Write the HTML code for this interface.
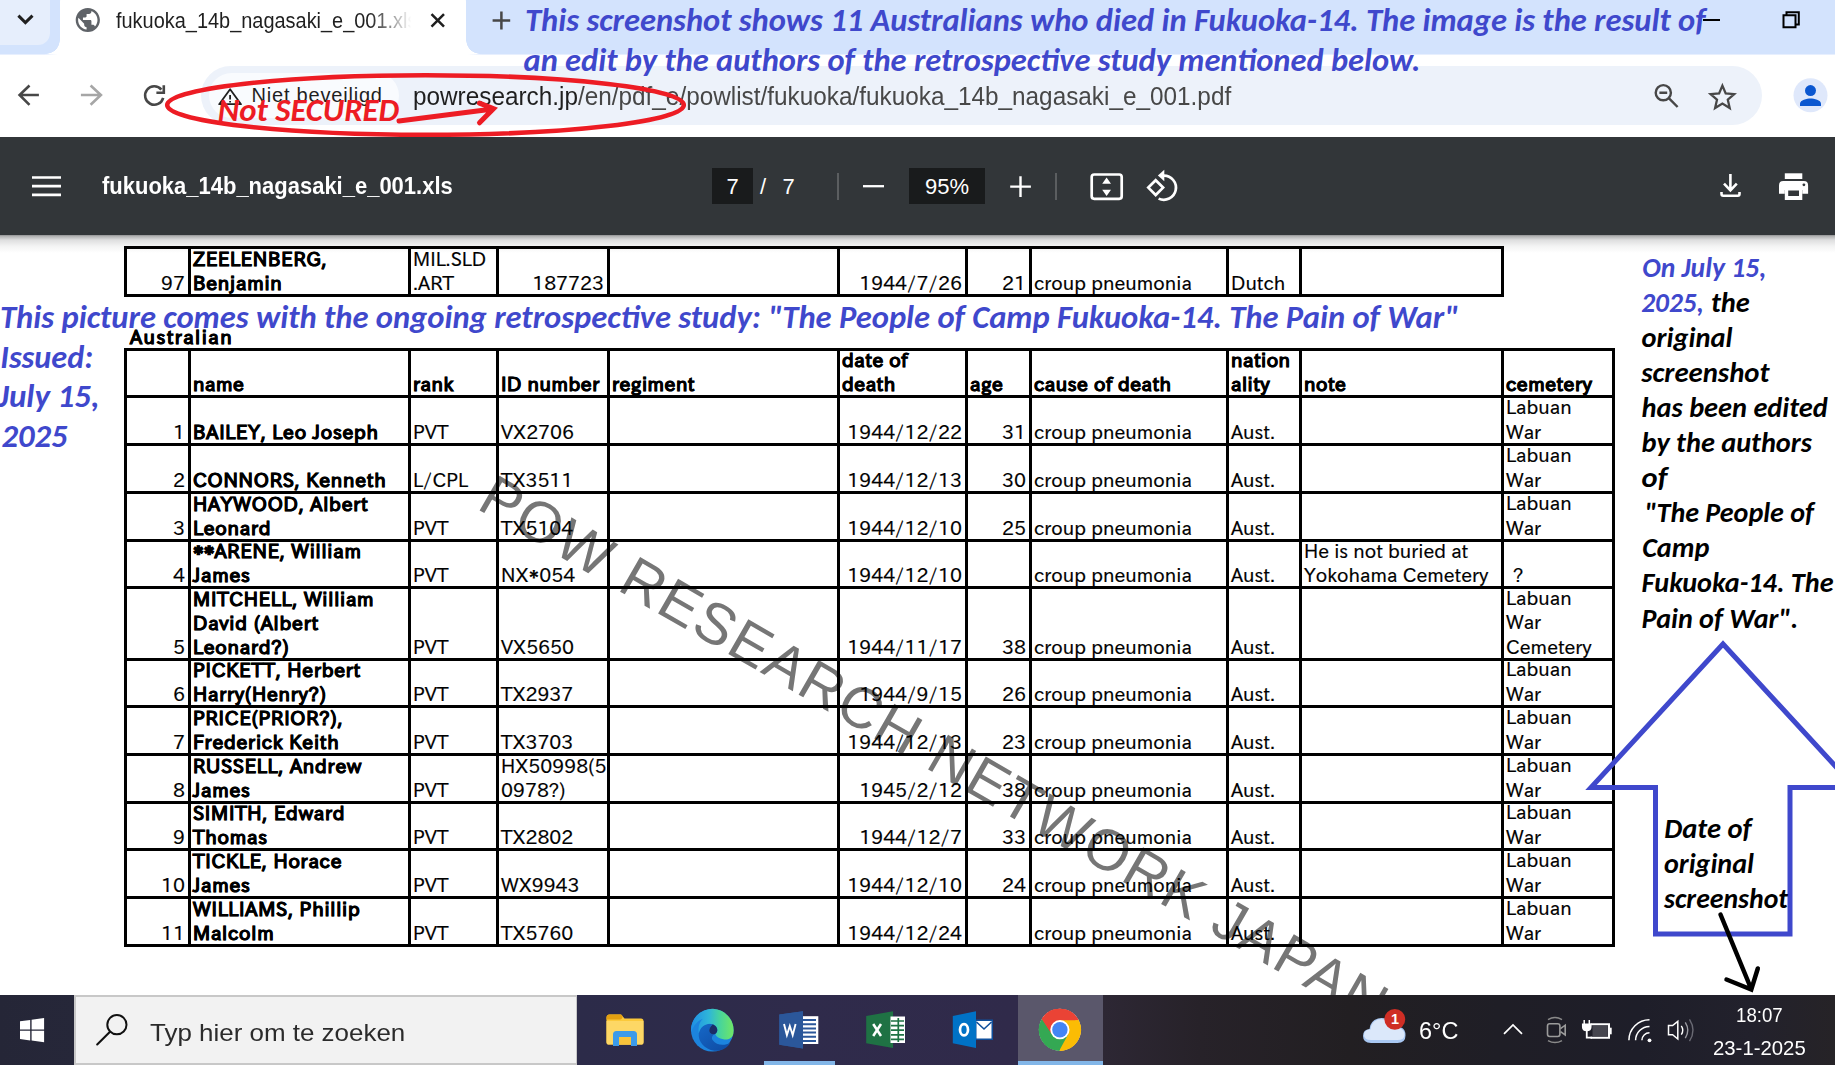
<!DOCTYPE html>
<html lang="en">
<head>
<meta charset="utf-8">
<title>fukuoka_14b_nagasaki_e_001.xls</title>
<style>
*{box-sizing:border-box;margin:0;padding:0}
html,body{width:1835px;height:1065px;overflow:hidden;background:#fff}
body{font-family:"Liberation Sans",sans-serif;color:#1f1f1f}
#screen{position:relative;width:1835px;height:1065px;overflow:hidden;background:#fff}
.abs{position:absolute}
svg{position:absolute;overflow:visible}
/* ---------- tab strip ---------- */
#tabstrip{position:absolute;left:0;top:0;width:1835px;height:54px;background:#d3e3fd}
#tabsearch{position:absolute;left:-12px;top:-12px;width:62px;height:57px;border-radius:12px;background:#e6eefc}
#tab{position:absolute;left:60px;top:-12px;width:406px;height:66px;background:#fff;border-radius:14px 14px 0 0}
#tab:before,#tab:after{content:"";position:absolute;bottom:0;width:14px;height:14px;background:radial-gradient(circle at 0 0,rgba(255,255,255,0) 13.5px,#fff 14px)}
#tab:before{left:-14px}
#tab:after{right:-14px;transform:scaleX(-1)}
#tabtitle{position:absolute;left:116px;top:6px;width:326px;height:30px;overflow:hidden;white-space:nowrap;font-size:22px;line-height:30px;color:#1f1f1f;transform-origin:0 50%;transform:scaleX(.906);-webkit-mask-image:linear-gradient(90deg,#000 86%,transparent 100%);mask-image:linear-gradient(90deg,#000 86%,transparent 100%)}
/* ---------- toolbar ---------- */
#toolbar{position:absolute;left:0;top:54px;width:1835px;height:83px;background:#fff}
#toolbar:before{content:"";position:absolute;left:0;top:0;width:1835px;height:1px;background:linear-gradient(90deg,#e7effe 0,#e7effe 44px,#fff 58px,#fff 468px,#e7effe 482px,#e7effe 100%)}
#omnibox{position:absolute;left:201px;top:12px;width:1561px;height:58.500px;border-radius:30px;background:#edf2fa}
#chip{position:absolute;left:8px;top:7px;width:190px;height:45px;border-radius:23px;background:#f9fbfe}
#chiptext{position:absolute;left:251.500px;top:83px;font-size:20px;line-height:24px;letter-spacing:.8px;white-space:nowrap;color:#1f1f1f}
#url{position:absolute;left:413px;top:80.500px;font-size:25px;line-height:30px;white-space:nowrap;color:#474747;transform-origin:0 50%;transform:scaleX(.973)}
#url b{font-weight:normal;color:#1f1f1f}
/* ---------- pdf toolbar ---------- */
#pdfbar{position:absolute;left:0;top:137px;width:1835px;height:98px;background:#323639;color:#fff}
#pdftitle{position:absolute;left:101.500px;top:33.700px;font-size:24px;line-height:30px;font-weight:bold;white-space:nowrap;color:#fff;transform-origin:0 50%;transform:scaleX(.916)}
.pbox{position:absolute;top:31px;height:36px;background:#191b1c;color:#fff;font-size:22px;line-height:38px;text-align:center}
.psep{position:absolute;top:36px;width:2px;height:27px;background:#5b5e60}
#shadow{position:absolute;left:0;top:235px;width:1835px;height:18px;pointer-events:none;background:linear-gradient(rgba(20,22,24,.47) 0,rgba(20,22,24,.32) 1.5px,rgba(20,22,24,.14) 5px,rgba(20,22,24,.05) 11px,rgba(20,22,24,0) 18px)}
/* ---------- pdf content ---------- */
#content{position:absolute;left:0;top:235px;width:1835px;height:760px;background:#fff}

/* ---------- table ---------- */
table.grid{position:absolute;border-collapse:separate;border-spacing:0;table-layout:fixed;font-family:"IPAPGothic","Liberation Sans",sans-serif;font-size:19px;line-height:24px;color:#000}
table.grid td,table.grid th{border-left:3px solid #000;border-top:3px solid #000;padding:0;vertical-align:bottom;text-align:left;font-weight:normal;white-space:nowrap;overflow:visible}
table.grid td:last-child,table.grid th:last-child{border-right:3px solid #000}
table.grid tr:last-child td{border-bottom:3px solid #000}
table.grid div{padding:0 3px 0 2px;margin-top:-9px;position:relative;top:1px}
table.grid{-webkit-text-stroke:.2px #000}
table.grid th{font-weight:bold;letter-spacing:.5px;-webkit-text-stroke:.45px #000}
table.grid td.b{font-weight:bold;letter-spacing:.75px;-webkit-text-stroke:.45px #000}
table.grid td.r{text-align:right}
table.grid td.s{font-size:19px;line-height:24.5px}
table.grid .ast{font-size:29px;line-height:0;position:relative;top:9px;letter-spacing:0}
#t2{width:1491px}
#t1{width:1380px}
#aus{position:absolute;left:130px;top:325px;font-family:"IPAPGothic","Liberation Sans",sans-serif;font-size:19px;line-height:24px;font-weight:bold;letter-spacing:1.45px;color:#000;white-space:nowrap;-webkit-text-stroke:.45px #000}
/* ---------- taskbar ---------- */
#taskbar{position:absolute;left:0;top:995px;width:1835px;height:70px;background:linear-gradient(90deg,#252637 0,#262739 75px,#2c2b49 580px,#2f2b4b 800px,#302a4a 1017px,#2d2734 1104px,#272229 1200px,#221f22 1350px,#1f1e26 1500px,#1e1e29 1640px,#22212c 1750px,#262327 1835px)}
#searchbox{position:absolute;left:74px;top:0;width:503px;height:70px;background:#f2f2f2;border:2px solid #c8c8c8;border-right-width:1px}
#searchtext{position:absolute;left:150px;top:20.600px;font-size:24.5px;line-height:34px;color:#2b2b2b;white-space:nowrap;transform-origin:0 50%;transform:scaleX(1.059)}

#chrometile{position:absolute;left:1018px;top:0;width:85px;height:66px;background:#5a576b}
.runbar{position:absolute;top:66px;height:4px;background:#82b6e8}
#badge1{position:absolute;left:1385px;top:14px;width:20px;text-align:center;font-size:14.5px;line-height:21px;font-weight:bold;color:#fff}
#temp{position:absolute;left:1419px;top:20.500px;font-size:24.5px;line-height:30px;color:#fff;white-space:nowrap;transform-origin:0 50%;transform:scaleX(.958)}
#clock{position:absolute;left:1736px;top:6.600px;font-size:20.4px;line-height:26px;color:#fff;white-space:nowrap;transform-origin:0 50%;transform:scaleX(.915)}
#date{position:absolute;left:1713px;top:39.500px;font-size:20.4px;line-height:26px;color:#fff;white-space:nowrap;transform-origin:0 50%;transform:scaleX(.997)}
</style>
</head>
<body>
<div id="screen">

<!-- PDF content -->
<div id="content"></div>
<svg id="wm" width="1835" height="1065" viewBox="0 0 1835 1065" style="left:0;top:0"><text x="0" y="0" transform="translate(475.5,508) rotate(30)" font-family="'Liberation Sans', sans-serif" font-size="58" letter-spacing="1.9" fill="#767676">POW RESEARCH NETWORK JAPAN</text></svg>
<div id="aus">Australian</div>
<table id="t2" class="grid" style="left:124px;top:348px">
<colgroup><col style="width:64px"><col style="width:220px"><col style="width:88px"><col style="width:111px"><col style="width:230px"><col style="width:128px"><col style="width:64px"><col style="width:197px"><col style="width:73px"><col style="width:202px"><col style="width:114px"></colgroup>
<tr style="height:47px"><th><div></div></th><th><div>name</div></th><th><div>rank</div></th><th><div>ID number</div></th><th><div>regiment</div></th><th><div>date of<br>death</div></th><th><div>age</div></th><th><div>cause of death</div></th><th><div>nation<br>ality</div></th><th><div>note</div></th><th><div>cemetery</div></th></tr>
<tr style="height:48px"><td class="r"><div>1</div></td><td class="b"><div>BAILEY, Leo Joseph</div></td><td><div>PVT</div></td><td><div>VX2706</div></td><td><div></div></td><td class="r"><div>1944/12/22</div></td><td class="r"><div>31</div></td><td><div>croup pneumonia</div></td><td><div>Aust.</div></td><td><div></div></td><td class="s"><div>Labuan<br>War</div></td></tr>
<tr style="height:48px"><td class="r"><div>2</div></td><td class="b"><div>CONNORS, Kenneth</div></td><td><div>L/CPL</div></td><td><div>TX3511</div></td><td><div></div></td><td class="r"><div>1944/12/13</div></td><td class="r"><div>30</div></td><td><div>croup pneumonia</div></td><td><div>Aust.</div></td><td><div></div></td><td class="s"><div>Labuan<br>War</div></td></tr>
<tr style="height:48px"><td class="r"><div>3</div></td><td class="b"><div>HAYWOOD, Albert<br>Leonard</div></td><td><div>PVT</div></td><td><div>TX5104</div></td><td><div></div></td><td class="r"><div>1944/12/10</div></td><td class="r"><div>25</div></td><td><div>croup pneumonia</div></td><td><div>Aust.</div></td><td><div></div></td><td class="s"><div>Labuan<br>War</div></td></tr>
<tr style="height:47px"><td class="r"><div>4</div></td><td class="b"><div><span class="ast">*</span><span class="ast">*</span>ARENE, William<br>James</div></td><td><div>PVT</div></td><td><div>NX<span class="ast">*</span>054</div></td><td><div></div></td><td class="r"><div>1944/12/10</div></td><td class="r"><div></div></td><td><div>croup pneumonia</div></td><td><div>Aust.</div></td><td><div>He is not buried at<br>Yokohama Cemetery</div></td><td class="s"><div style="padding-left:9px">?</div></td></tr>
<tr style="height:72px"><td class="r"><div>5</div></td><td class="b"><div>MITCHELL, William<br>David (Albert<br>Leonard?)</div></td><td><div>PVT</div></td><td><div>VX5650</div></td><td><div></div></td><td class="r"><div>1944/11/17</div></td><td class="r"><div>38</div></td><td><div>croup pneumonia</div></td><td><div>Aust.</div></td><td><div></div></td><td class="s"><div>Labuan<br>War<br>Cemetery</div></td></tr>
<tr style="height:47px"><td class="r"><div>6</div></td><td class="b"><div>PICKETT, Herbert<br>Harry(Henry?)</div></td><td><div>PVT</div></td><td><div>TX2937</div></td><td><div></div></td><td class="r"><div>1944/9/15</div></td><td class="r"><div>26</div></td><td><div>croup pneumonia</div></td><td><div>Aust.</div></td><td><div></div></td><td class="s"><div>Labuan<br>War</div></td></tr>
<tr style="height:48px"><td class="r"><div>7</div></td><td class="b"><div>PRICE(PRIOR?),<br>Frederick Keith</div></td><td><div>PVT</div></td><td><div>TX3703</div></td><td><div></div></td><td class="r"><div>1944/12/13</div></td><td class="r"><div>23</div></td><td><div>croup pneumonia</div></td><td><div>Aust.</div></td><td><div></div></td><td class="s"><div>Labuan<br>War</div></td></tr>
<tr style="height:48px"><td class="r"><div>8</div></td><td class="b"><div>RUSSELL, Andrew<br>James</div></td><td><div>PVT</div></td><td><div>HX50998(5<br>0978?)</div></td><td><div></div></td><td class="r"><div>1945/2/12</div></td><td class="r"><div>38</div></td><td><div>croup pneumonia</div></td><td><div>Aust.</div></td><td><div></div></td><td class="s"><div>Labuan<br>War</div></td></tr>
<tr style="height:47px"><td class="r"><div>9</div></td><td class="b"><div>SIMITH, Edward<br>Thomas</div></td><td><div>PVT</div></td><td><div>TX2802</div></td><td><div></div></td><td class="r"><div>1944/12/7</div></td><td class="r"><div>33</div></td><td><div>croup pneumonia</div></td><td><div>Aust.</div></td><td><div></div></td><td class="s"><div>Labuan<br>War</div></td></tr>
<tr style="height:48px"><td class="r"><div>10</div></td><td class="b"><div>TICKLE, Horace<br>James</div></td><td><div>PVT</div></td><td><div>WX9943</div></td><td><div></div></td><td class="r"><div>1944/12/10</div></td><td class="r"><div>24</div></td><td><div>croup pneumonia</div></td><td><div>Aust.</div></td><td><div></div></td><td class="s"><div>Labuan<br>War</div></td></tr>
<tr style="height:51px"><td class="r"><div>11</div></td><td class="b"><div>WILLIAMS, Phillip<br>Malcolm</div></td><td><div>PVT</div></td><td><div>TX5760</div></td><td><div></div></td><td class="r"><div>1944/12/24</div></td><td class="r"><div></div></td><td><div>croup pneumonia</div></td><td><div>Aust.</div></td><td><div></div></td><td class="s"><div>Labuan<br>War</div></td></tr>
</table>
<table id="t1" class="grid" style="left:124px;top:246px">
<colgroup><col style="width:64px"><col style="width:220px"><col style="width:88px"><col style="width:111px"><col style="width:230px"><col style="width:128px"><col style="width:64px"><col style="width:197px"><col style="width:73px"><col style="width:205px"></colgroup>
<tr style="height:51px"><td class="r"><div>97</div></td><td class="b"><div>ZEELENBERG,<br>Benjamin</div></td><td><div>MIL.SLD<br>.ART</div></td><td class="r"><div>187723</div></td><td><div></div></td><td class="r"><div>1944/7/26</div></td><td class="r"><div>21</div></td><td><div>croup pneumonia</div></td><td><div>Dutch</div></td><td><div></div></td></tr>
</table>

<!-- Chrome tab strip -->
<div id="tabstrip">
  <div id="tabsearch"></div>
  <div id="tab"></div>
  <div id="tabtitle">fukuoka_14b_nagasaki_e_001.xls</div>
</div>

<!-- Chrome toolbar -->
<div id="toolbar">
  <div id="omnibox"><div id="chip"></div></div>
</div>
<div id="chiptext">Niet beveiligd</div>
<div id="url"><b>powresearch.jp</b>/en/pdf_e/powlist/fukuoka/fukuoka_14b_nagasaki_e_001.pdf</div>


<!-- Chrome UI icons -->
<svg id="chromeicons" width="1835" height="137" viewBox="0 0 1835 137" style="left:0;top:0" fill="none">
  <path d="M18.4,15.6 L25.4,22.6 L32.5,15.6" stroke="#1f1f1f" stroke-width="3"/>
  <g transform="translate(87.8,20) scale(1.21) translate(-12,-12)"><path fill="#5f6368" d="M12 2C6.48 2 2 6.48 2 12s4.48 10 10 10 10-4.48 10-10S17.52 2 12 2zm-1 17.93c-3.95-.49-7-3.85-7-7.93 0-.62.08-1.21.21-1.79L9 15v1c0 1.1.9 2 2 2v1.930zm6.9-2.54c-.26-.81-1-1.39-1.9-1.39h-1v-3c0-.55-.45-1-1-1H8v-2h2c.55 0 1-.45 1-1V7h2c1.1 0 2-.9 2-2v-.41c2.93 1.19 5 4.06 5 7.41 0 2.08-.8 3.97-2.1 5.39z"/></g>
  <path d="M431.5,14.2 L444,26.7 M444,14.2 L431.5,26.7" stroke="#1f1f1f" stroke-width="2.5"/>
  <path d="M492.6,20.6 H510.2 M501.4,11.6 V29.6" stroke="#474747" stroke-width="2.5"/>
  <path d="M1703,20 H1720" stroke="#000" stroke-width="2"/>
  <path d="M1783.5,15.3 H1795.5 V27.3 H1783.5 Z M1786.5,15 V12.3 H1798.8 V24.5 H1796" stroke="#000" stroke-width="2"/>
  <path d="M38.9,95 H20 M29.5,85.5 L19.6,95 L29.5,104.8" stroke="#474747" stroke-width="2.6"/>
  <path d="M80.9,95 H100.6 M90.6,85.5 L100.9,95 L90.6,104.8" stroke="#a6a6a6" stroke-width="2.6"/>
  <path d="M161.35,89.6 A9.2,9.2 0 1 0 163.19,97.88 M156.4,92.7 H163.8 V85.3" stroke="#474747" stroke-width="2.6"/>
  <path d="M230.1,89.3 L241,104.2 H219.2 Z M230.1,95 V99.5 M230.1,101 V102.6" stroke="#1f1f1f" stroke-width="1.8" stroke-linejoin="round"/>
  <circle cx="1663.3" cy="92.7" r="7.6" stroke="#474747" stroke-width="2.4"/>
  <path d="M1668.8,98.2 L1677.6,107 M1659.4,92.7 H1667.2" stroke="#474747" stroke-width="2.4"/>
  <path d="M1722.4,85.6 L1725.7,93.4 L1734.2,94.1 L1727.8,99.7 L1729.7,108 L1722.4,103.6 L1715.1,108 L1717,99.7 L1710.6,94.1 L1719.1,93.4 Z" stroke="#474747" stroke-width="2.3" stroke-linejoin="miter"/>
  <circle cx="1810.5" cy="95.3" r="17" fill="#dfe8fb"/>
  <circle cx="1810.5" cy="90.6" r="5.5" fill="#0b57d0"/>
  <path d="M1800,106 V103.5 C1800,100 1807,98.4 1810.5,98.4 C1814,98.4 1821,100 1821,103.5 V106 Z" fill="#0b57d0"/>
</svg>

<!-- PDF viewer toolbar -->
<div id="pdfbar">
  <div id="pdftitle">fukuoka_14b_nagasaki_e_001.xls</div>
  <div class="pbox" style="left:712px;width:41px">7</div>
  <div class="abs" style="left:760px;top:31px;font-size:22px;line-height:38px">/</div>
  <div class="abs" style="left:782.500px;top:31px;font-size:22px;line-height:38px">7</div>
  <div class="psep" style="left:837px"></div>
  <div class="pbox" style="left:909px;width:76px">95%</div>
  <div class="psep" style="left:1055px"></div>
</div>

<svg id="pdficons" width="1835" height="98" viewBox="0 137 1835 98" style="left:0;top:137px" fill="none">
  <path d="M32,177.5 H61 M32,186.2 H61 M32,194.9 H61" stroke="#fff" stroke-width="2.7"/>
  <path d="M863,186.2 H884" stroke="#fff" stroke-width="2.3"/>
  <path d="M1010.2,186.6 H1030.9 M1020.5,176.2 V197" stroke="#fff" stroke-width="2.4"/>
  <rect x="1091.7" y="174.5" width="30" height="24.3" rx="2.5" stroke="#fff" stroke-width="2.7"/>
  <path d="M1106.6,177.4 L1111,183.8 H1102.2 Z M1106.6,196 L1111,189.8 H1102.2 Z" fill="#fff"/>
  <path d="M1155.7,180.2 L1163.1,187.6 L1155.7,195 L1148.3,187.6 Z" stroke="#fff" stroke-width="2.7"/>
  <path d="M1163.6,175.6 A12.1,12.1 0 1 1 1158.6,198.6" stroke="#fff" stroke-width="2.7"/>
  <path d="M1157.9,175.6 L1164.3,169.8 V181.3 Z" fill="#fff"/>
  <path d="M1730.4,174 V189.5 M1724,183.6 L1730.4,190.3 L1736.8,183.6 M1721.5,192 V194 Q1721.5,195.7 1723.2,195.7 H1737.8 Q1739.5,195.7 1739.5,194 V192" stroke="#fff" stroke-width="2.6"/>
  <rect x="1784.8" y="173.3" width="17.5" height="5.7" fill="#fff"/>
  <path d="M1779,185.4 Q1779,181.1 1783.3,181.1 H1803.8 Q1808.1,181.1 1808.1,185.4 V193.8 H1802.3 V190 H1784.8 V193.8 H1779 Z" fill="#fff"/>
  <path d="M1784.8,190 H1802.3 V199.9 H1784.8 Z M1788.2,190.5 V196 H1799 V190.5 Z" fill="#fff" fill-rule="evenodd"/>
  <circle cx="1803.9" cy="184.8" r="1.4" fill="#323639"/>
</svg>
<div id="shadow"></div>

<!-- Windows taskbar -->
<div id="taskbar">
  <div id="searchbox"></div>
  <div id="searchtext">Typ hier om te zoeken</div>

  <div id="chrometile"></div>
  <div class="runbar" style="left:764px;width:71px"></div>
  <div class="runbar" style="left:1018px;width:85px"></div>
  <svg id="taskicons" width="1835" height="70" viewBox="0 995 1835 70" style="left:0;top:0" fill="none">
    <!-- start -->
    <path d="M20,1021.3 L30.2,1019.9 V1029.4 H20 Z M31.6,1019.7 L44.1,1017.9 V1029.4 H31.6 Z M20,1030.8 H30.2 V1040.4 L20,1039 Z M31.6,1030.8 H44.1 V1042.3 L31.6,1040.6 Z" fill="#fff"/>
    <!-- search glass -->
    <circle cx="116.9" cy="1024.7" r="9.6" stroke="#111" stroke-width="2"/>
    <path d="M110,1031.8 L97.2,1044.4" stroke="#111" stroke-width="2.1" stroke-linecap="round"/>
    <!-- file explorer -->
    <path d="M606.5,1018 Q606.5,1014.4 609.5,1014.4 H621 L624.5,1018.4 H641 Q643.5,1018.4 643.5,1021 V1042 Q643.5,1044.6 641,1044.6 H609 Q606.5,1044.6 606.5,1042 Z" fill="#fbc93b"/>
    <path d="M606.5,1017.5 Q606.5,1014.4 609.5,1014.4 H620.5 Q622.5,1014.4 622.5,1016.6 Q622.5,1019.4 620,1019.4 H606.5 Z" fill="#e3a010"/>
    <path d="M606.5,1021 H643.5 V1042 Q643.5,1044.6 641,1044.6 H609 Q606.5,1044.6 606.5,1042 Z" fill="#fdd765"/>
    <path d="M613,1046 V1034.5 Q613,1031 616.5,1031 H633.5 Q637,1031 637,1034.5 V1046 H631 V1037 H619 V1046 Z" fill="#3c9be9"/>
    <rect x="619" y="1037" width="12" height="7.6" fill="#f9c33a"/>
    <!-- edge -->
    <defs>
      <linearGradient id="eg1" x1="-21" y1="0" x2="21" y2="0" gradientUnits="userSpaceOnUse"><stop offset="0" stop-color="#1f8fe5"/><stop offset=".42" stop-color="#2fb6d8"/><stop offset=".68" stop-color="#47d49c"/><stop offset="1" stop-color="#70e666"/></linearGradient>
      <linearGradient id="eg2" x1="-10" y1="-8" x2="10" y2="20" gradientUnits="userSpaceOnUse"><stop offset="0" stop-color="#1567c7"/><stop offset="1" stop-color="#0f4ea6"/></linearGradient>
    </defs>
    <g transform="translate(712.3,1030.2)">
      <circle r="21.3" fill="#1c84de"/>
      <path d="M2.9,3.7 C0,5 -3.500,3 -3,-0.500 C-2.500,-3.500 0,-5.500 0.500,-6 C-5,-8 -12,-4.500 -13.500,3 C-14.500,11 -8,19 2,20.500 C8,21.300 14.500,18.500 18,12.500 C12,16 4,15 0.500,10 C-1,8 -0.500,5 2.9,3.7 Z" fill="url(#eg2)"/>
      <path d="M-21.2,2 A21.3,21.3 0 1 1 21,3.500 C20.500,8 15,10 11,9 C7,8.300 4,6.500 2.9,3.700 C6.500,1.500 5.500,-4 0.500,-6 C-5,-8 -12,-4.500 -13.500,3 C-14.500,-3 -13,-8 -9.500,-11.500 C-14,-10 -19,-5 -21.200,2 Z" fill="url(#eg1)"/>
      <path d="M2.9,3.700 C0,5 -3.500,3 -3,-0.500 C-2.600,-3 -0.500,-5 0.500,-6 C5.500,-4 6.500,1.500 2.900,3.700 Z" fill="#1b2c66"/>
    </g>
    <!-- word -->
    <path d="M779.3,1014.500 L803,1011.300 V1048.500 L779.3,1044.800 Z" fill="#2b579a"/>
    <rect x="801.300" y="1016.200" width="17" height="27.800" fill="#fff"/>
    <path d="M803,1020 H816 M803,1024.200 H816 M803,1028.400 H816 M803,1032.600 H816 M803,1036.800 H816 M803,1041 H816" stroke="#2b579a" stroke-width="2"/>
    <path d="M779.3,1014.500 L803,1011.300 V1048.500 L779.3,1044.800 Z" fill="#2b579a"/>
    <path d="M784,1024 L786.900,1035 L789.800,1026 L792.700,1035 L795.600,1024" stroke="#fff" stroke-width="1.9" stroke-linejoin="miter"/>
    <!-- excel -->
    <path d="M866.2,1016 L893,1011.3 V1048 L866.2,1043.3 Z" fill="#1f7244"/>
    <rect x="890.5" y="1016.5" width="14.5" height="26.5" fill="#fff"/>
    <path d="M891,1021 H904 M891,1025.6 H904 M891,1030.2 H904 M891,1034.8 H904 M891,1039.4 H904 M898.3,1018 V1042" stroke="#1f7244" stroke-width="1.7"/>
    <path d="M873.2,1024 L881,1036 M881,1024 L873.2,1036" stroke="#fff" stroke-width="2.5"/>
    <!-- outlook -->
    <rect x="975" y="1019.5" width="18" height="20.5" fill="#0f4f9c"/>
    <path d="M976.5,1021 H991.5 V1038.5 H976.5 Z" fill="#fff"/>
    <path d="M976.5,1022 L984,1029 L991.5,1022" stroke="#0f4f9c" stroke-width="1.6"/>
    <path d="M952.8,1016 L976,1011.3 V1048 L952.8,1043.3 Z" fill="#0072c6"/>
    <ellipse cx="964" cy="1029.8" rx="4" ry="5.6" stroke="#fff" stroke-width="2.7"/>
    <!-- chrome -->
    <circle cx="1059.9" cy="1029.7" r="21" fill="#fff"/>
    <path d="M1059.9,1029.7 L1041.7,1019.2 A21,21 0 0 1 1078.1,1019.2 Z" fill="#ea4335"/>
    <path d="M1059.9,1029.7 L1078.1,1019.2 A21,21 0 0 1 1059.9,1050.7 Z" fill="#fbbc04"/>
    <path d="M1059.9,1029.7 L1059.9,1050.7 A21,21 0 0 1 1041.7,1019.2 Z" fill="#34a853"/>
    <path d="M1059.9,1020.2 H1078.5 A21,21 0 0 0 1041.7,1019.2 L1051.7,1034.5 Z" fill="#ea4335"/>
    <path d="M1068.1,1034.5 L1059.2,1050.7 A21,21 0 0 0 1078.5,1020.2 H1059.9 Z" fill="#fbbc04"/>
    <path d="M1051.7,1034.5 L1041.7,1019.2 A21,21 0 0 0 1059.2,1050.7 L1068.1,1034.5 Z" fill="#34a853"/>
    <circle cx="1059.9" cy="1029.7" r="9.6" fill="#fff"/>
    <circle cx="1059.9" cy="1029.7" r="7.7" fill="#4285f4"/>
    <!-- weather -->
    <path d="M1371,1043 Q1363,1043 1363,1036 Q1363,1029.5 1369.5,1029 Q1370,1021 1378,1018.5 Q1386,1016.5 1391,1023 Q1398,1021 1401,1027.5 Q1405.5,1029 1405.5,1035.5 Q1405.5,1043 1397.5,1043 Z" fill="#a9c8f2"/>
    <path d="M1371,1040 Q1364,1040 1364,1035 Q1364,1029.5 1370.5,1029.5 Q1371,1022 1378,1019.5 Q1385,1018 1390,1024 Q1397,1022 1400,1028.5 Q1404.500,1030 1404.500,1034.5 Q1404.500,1040 1397.500,1040 Z" fill="#dbe8fa"/>
    <circle cx="1394.8" cy="1019.4" r="10.4" fill="#cf2e25"/>
    <!-- tray chevron -->
    <path d="M1504,1033.8 L1513,1025 L1522,1033.8" stroke="#fff" stroke-width="1.7"/>
    <!-- meet now -->
    <rect x="1547.500" y="1023.7" width="12.4" height="12.8" rx="2.2" stroke="#9b9b9b" stroke-width="1.6"/>
    <path d="M1560.500,1028.6 L1565.200,1025.2 V1035 L1560.500,1031.6" stroke="#9b9b9b" stroke-width="1.6"/>
    <path d="M1548,1019.600 Q1555,1015.6 1562,1019.600 M1548,1040.600 Q1555,1044.6 1562,1040.600" stroke="#8a8a8a" stroke-width="1.5"/>
    <!-- battery -->
    <path d="M1590.500,1024.300 H1609 V1037.700 H1590.500" stroke="#fff" stroke-width="2"/>
    <rect x="1609.5" y="1027.700" width="2.2" height="6.6" fill="#fff"/>
    <rect x="1592.5" y="1026" width="15.3" height="10" fill="#d8d8dc" opacity=".22"/>
    <path d="M1584.200,1020 V1024 M1589.300,1020 V1024 M1582.700,1024.300 H1590.800 V1027 Q1590.800,1030.500 1586.750,1030.500 Q1582.700,1030.500 1582.700,1027 Z" stroke="#fff" stroke-width="1.5" fill="#fff"/>
    <path d="M1586.750,1030 V1037.700 H1592" stroke="#fff" stroke-width="1.8"/>
    <!-- wifi -->
    <circle cx="1649.500" cy="1040.300" r="1.9" fill="#fff"/>
    <path d="M1641.900,1040.300 A7.600,7.600 0 0 1 1649.500,1032.700 M1635.600,1040.300 A13.900,13.900 0 0 1 1649.500,1026.400 M1628.900,1040.300 A20.600,20.600 0 0 1 1649.500,1019.700" stroke="#fff" stroke-width="1.5"/>
    <!-- speaker -->
    <path d="M1668.500,1025.600 H1672.600 L1677.800,1021.300 V1039 L1672.600,1034.700 H1668.500 Z" stroke="#fff" stroke-width="1.5" stroke-linejoin="miter"/>
    <path d="M1681.300,1025.800 Q1684.300,1030.200 1681.300,1034.600" stroke="#fff" stroke-width="1.4"/>
    <path d="M1685.300,1022.300 Q1690.300,1030.200 1685.300,1038.100" stroke="#9a9aa2" stroke-width="1.4"/>
    <path d="M1689.500,1019.300 Q1696.500,1030.200 1689.500,1041.100" stroke="#6a6a74" stroke-width="1.4"/>
  </svg>
  <div id="badge1">1</div>
  <div id="temp">6°C</div>
  <div id="clock">18:07</div>
  <div id="date">23-1-2025</div>
</div>

<!-- annotations drawn over the screenshot -->
<svg id="anno" width="1835" height="1065" viewBox="0 0 1835 1065" style="left:0;top:0" font-family="Carlito, 'Liberation Sans', sans-serif" font-weight="bold" font-style="italic">
<ellipse cx="425.5" cy="105" rx="258.3" ry="29.8" fill="none" stroke="#ed1c24" stroke-width="4.6"/>
<path d="M399,121 L493,108.9 M479.5,103.2 L493.5,108.6 L479.5,122.8" fill="none" stroke="#ed1c24" stroke-width="5" stroke-linecap="round" stroke-linejoin="miter"/>
<path d="M1723,644 L1591,787.5 L1655.5,787.5 L1655.5,934 L1790,934 L1790,787.5 L1855,787.5 Z" fill="none" stroke="#3f48cc" stroke-width="5" stroke-linejoin="miter"/>
<path d="M1720.5,914.5 L1750.8,988 M1726.5,979.5 L1751.3,989.5 L1757.8,968.5" fill="none" stroke="#000" stroke-width="4.5" stroke-linecap="round" stroke-linejoin="miter"/>
<text x="525" y="31.0" font-size="32.5" fill="#3f48cc" textLength="1180.5" lengthAdjust="spacingAndGlyphs">This screenshot shows 11 Australians who died in Fukuoka-14. The image is the result of</text>
<text x="523.5" y="71.2" font-size="32.5" fill="#3f48cc" textLength="897.0" lengthAdjust="spacingAndGlyphs">an edit by the authors of the retrospective study mentioned below.</text>
<text x="217.7" y="121.3" font-size="32.5" fill="#ed1c24" textLength="181.5" lengthAdjust="spacingAndGlyphs">Not SECURED</text>
<text x="0" y="327.5" font-size="32.5" fill="#3f48cc" textLength="1458.5" lengthAdjust="spacingAndGlyphs">This picture comes with the ongoing retrospective study: "The People of Camp Fukuoka-14. The Pain of War"</text>
<text x="0.3" y="367.6" font-size="32.5" fill="#3f48cc" textLength="92.8" lengthAdjust="spacingAndGlyphs">Issued:</text>
<text x="-2" y="406.7" font-size="32.5" fill="#3f48cc" textLength="101.5" lengthAdjust="spacingAndGlyphs">July 15,</text>
<text x="1.4" y="446.7" font-size="32.5" fill="#3f48cc" textLength="66.1" lengthAdjust="spacingAndGlyphs">2025</text>
<text x="1642.2" y="277.3" font-size="28" fill="#3f48cc" textLength="124.1" lengthAdjust="spacingAndGlyphs">On July 15,</text>
<text x="1641.2" y="312.3" font-size="28" fill="#3f48cc" textLength="62.5" lengthAdjust="spacingAndGlyphs">2025,</text>
<text x="1710.9" y="312.3" font-size="28" fill="#000" textLength="38.8" lengthAdjust="spacingAndGlyphs">the</text>
<text x="1641.6" y="347.3" font-size="28" fill="#000" textLength="90.9" lengthAdjust="spacingAndGlyphs">original</text>
<text x="1641.2" y="382.3" font-size="28" fill="#000" textLength="128.3" lengthAdjust="spacingAndGlyphs">screenshot</text>
<text x="1641.6" y="417.3" font-size="28" fill="#000" textLength="186.2" lengthAdjust="spacingAndGlyphs">has been edited</text>
<text x="1641.6" y="452.3" font-size="28" fill="#000" textLength="170.3" lengthAdjust="spacingAndGlyphs">by the authors</text>
<text x="1641.6" y="487.3" font-size="28" fill="#000" textLength="25.7" lengthAdjust="spacingAndGlyphs">of</text>
<text x="1644.2" y="522.0" font-size="28" fill="#000" textLength="169.7" lengthAdjust="spacingAndGlyphs">"The People of</text>
<text x="1642.2" y="557.0" font-size="28" fill="#000" textLength="67.1" lengthAdjust="spacingAndGlyphs">Camp</text>
<text x="1641.6" y="592.3" font-size="28" fill="#000" textLength="191.9" lengthAdjust="spacingAndGlyphs">Fukuoka-14. The</text>
<text x="1641.6" y="627.5" font-size="28" fill="#000" textLength="156.6" lengthAdjust="spacingAndGlyphs">Pain of War".</text>
<text x="1664.2" y="838.3" font-size="28" fill="#000" textLength="87.3" lengthAdjust="spacingAndGlyphs">Date of</text>
<text x="1664" y="873.0" font-size="28" fill="#000" textLength="89.9" lengthAdjust="spacingAndGlyphs">original</text>
<text x="1664" y="907.7" font-size="28" fill="#000" textLength="123.9" lengthAdjust="spacingAndGlyphs">screenshot</text>
</svg>

</div>
</body>
</html>
